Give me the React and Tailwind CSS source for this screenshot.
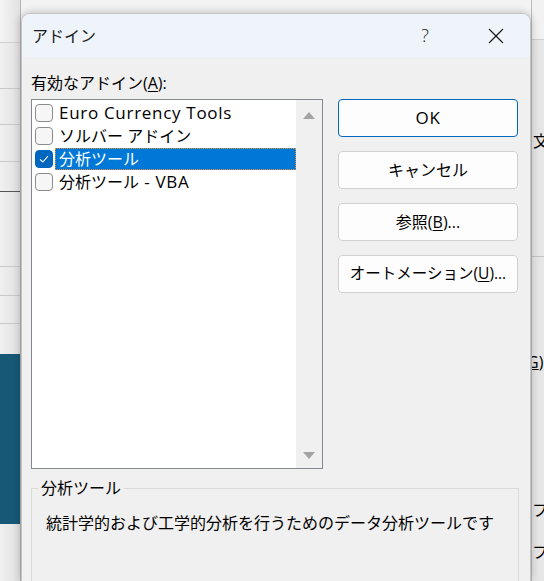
import React from 'react';

const FONT = { fontFamily: '"Open Sans", "Noto Sans CJK JP", sans-serif' };

// Latin runs are drawn a little larger and wider, as Segoe UI is next to Yu Gothic UI
const L = ({ children }) => <span className="text-[17px] tracking-[0.7px]">{children}</span>;

const ADDINS = [
  { id: 'euro', name: <L>Euro Currency Tools</L>, checked: false },
  { id: 'solver', name: 'ソルバー アドイン', checked: false },
  { id: 'atp', name: '分析ツール', checked: true, selected: true },
  {
    id: 'atpvba',
    name: (
      <>
        分析ツール<L>&nbsp;- VBA</L>
      </>
    ),
    checked: false,
  },
];

// background sheet cells on the left, heights match the grid behind the dialog
const LEFT_CELLS = [
  'h-[43px] border-b border-[#cfcfcf] bg-gradient-to-r from-[#f4f4f4] to-[#e2e2e2]',
  'h-[46px] border-b border-[#c9c9c9] bg-gradient-to-r from-[#f0f0f0] to-[#e0e0e0]',
  'h-[36px] border-b border-[#c9c9c9] bg-gradient-to-r from-[#f0f0f0] to-[#e0e0e0]',
  'h-[37px] border-b border-[#c9c9c9] bg-gradient-to-r from-[#f0f0f0] to-[#e0e0e0]',
  'h-[30px] border-b border-[#555555] bg-gradient-to-r from-[#f0f0f0] to-[#e0e0e0]',
  'h-[75px] border-b border-[#c9c9c9] bg-gradient-to-r from-[#f0f0f0] to-[#e0e0e0]',
  'h-[29px] border-b border-[#c9c9c9] bg-gradient-to-r from-[#f0f0f0] to-[#e0e0e0]',
  'h-[28px] border-b border-[#c9c9c9] bg-gradient-to-r from-[#f0f0f0] to-[#e0e0e0]',
  'h-[30px] bg-gradient-to-r from-[#f0f0f0] to-[#e0e0e0]',
  'h-[170px] bg-[#175877]',
  'flex-1 bg-gradient-to-r from-[#f0f0f0] to-[#e0e0e0]',
];

const CheckBox = ({ checked }) => (
  <div
    className={
      'flex h-[18px] w-[18px] shrink-0 items-center justify-center rounded-[4px] border ' +
      (checked ? 'border-[#0067c0] bg-[#0067c0]' : 'border-[#8b8b8b] bg-[#f6f6f6]')
    }
  >
    {checked && (
      <svg width="12" height="12" viewBox="0 0 12 12" fill="none">
        <path d="M2 6.3 L4.8 9 L10 3.2" stroke="white" strokeWidth="1.1" />
      </svg>
    )}
  </div>
);

const AddinRow = ({ item }) => (
  <div className="flex h-[23px] shrink-0 items-center pl-[3px]">
    <CheckBox checked={item.checked} />
    <div
      className={
        'ml-[2px] flex h-[22px] items-center whitespace-nowrap pl-[3px] text-[16px] leading-none ' +
        (item.selected
          ? 'flex-1 border border-dotted border-[#e8913a] bg-[#0078d7] text-white'
          : 'border border-transparent text-black')
      }
    >
      {item.name}
    </div>
  </div>
);

const DialogButton = ({ children, primary }) => (
  <button
    className={
      'flex h-[38px] w-[180px] shrink-0 items-center justify-center rounded-[4px] border bg-[#fdfdfd] text-[16px] text-black ' +
      (primary ? 'border-[#0067c0]' : 'border-[#d0d0d0]')
    }
  >
    {children}
  </button>
);

const App = () => {
  return (
    <div className="flex h-[581px] w-[544px] overflow-hidden bg-[#f3f3f3]" style={FONT}>
      {/* sheet behind, left */}
      <div className="flex w-[21px] shrink-0 flex-col border-r border-[#b4b4b4]">
        {LEFT_CELLS.map((c, i) => (
          <div key={i} className={'shrink-0 ' + c} />
        ))}
      </div>

      {/* dialog */}
      <div className="z-10 mt-[13px] flex w-[510px] shrink-0 flex-col overflow-hidden rounded-t-[9px] border border-b-0 border-[#c4c4c4] bg-[#f0f0f0] shadow-[0_0_8px_rgba(0,0,0,0.25)]">
        <div className="flex h-[43px] shrink-0 items-center bg-[#eef4f9] pl-[10px]">
          <span className="text-[16px] text-[#1b1b1b]">アドイン</span>
          <div className="ml-auto flex items-center pr-[11px]">
            <span className="flex w-[46px] justify-center text-[18px] font-light text-[#1b1b1b]">?</span>
            <span className="ml-[25px] flex w-[46px] justify-center">
              <svg width="16" height="16" viewBox="0 0 16 16">
                <path d="M1 1 L15 15 M15 1 L1 15" stroke="#1b1b1b" strokeWidth="1.2" />
              </svg>
            </span>
          </div>
        </div>

        <div className="flex shrink-0 flex-col px-[9px] pt-[16px]">
          <div className="mb-[6px] h-[20px] shrink-0 text-[16px] leading-[20px] text-black">
            有効なアドイン(<span className="underline underline-offset-2">A</span>):
          </div>

          <div className="flex shrink-0">
            <div className="flex h-[370px] w-[292px] shrink-0 border border-[#828790] bg-white">
              <div className="flex flex-1 flex-col pt-[1px]">
                {ADDINS.map((a) => (
                  <AddinRow key={a.id} item={a} />
                ))}
              </div>
              <div className="flex w-[26px] flex-col items-center justify-between bg-[#f0f0f0] pb-[9px] pt-[12px]">
                <svg width="12" height="7" viewBox="0 0 12 7">
                  <path d="M6 0 L12 7 L0 7 Z" fill="#a3a3a3" />
                </svg>
                <svg width="12" height="7" viewBox="0 0 12 7">
                  <path d="M0 0 L12 0 L6 7 Z" fill="#a3a3a3" />
                </svg>
              </div>
            </div>

            <div className="ml-[15px] flex flex-col gap-[14px]">
              <DialogButton primary>
                <L>OK</L>
              </DialogButton>
              <DialogButton>キャンセル</DialogButton>
              <DialogButton>
                参照(<span className="underline underline-offset-2">B</span>)...
              </DialogButton>
              <DialogButton>
                <span className="text-[15.5px]">
                  オートメーション(<span className="underline underline-offset-2">U</span>)...
                </span>
              </DialogButton>
            </div>
          </div>

          <fieldset className="mt-[9px] h-[140px] w-[488px] shrink-0 border border-[#dadada]">
            <legend className="ml-[6px] px-[3px] text-[16px] leading-[20px] text-black">分析ツール</legend>
            <p className="pl-[14px] pt-[15px] text-[16px] leading-[20px] text-black">
              統計学的および工学的分析を行うためのデータ分析ツールです
            </p>
          </fieldset>
        </div>
      </div>

      {/* sheet behind, right */}
      <div className="flex flex-1 flex-col overflow-hidden border-l border-[#bdbdbd] bg-[#e6e6e6] text-[16px] leading-[20px] text-black">
        <div className="h-[40px] shrink-0 border-b border-[#d0d0d0] bg-[#f2f2f2]" />
        <div className="h-[217px] shrink-0 border-b border-[#c4c4c4] pl-[1px] pt-[91px]">文</div>
        <div className="h-[243px] shrink-0 whitespace-nowrap pt-[95px]">
          <span className="-ml-[5px] underline">G</span>)
        </div>
        <div className="shrink-0 whitespace-nowrap">フロ</div>
        <div className="mt-[22px] shrink-0 whitespace-nowrap">フロ</div>
      </div>
    </div>
  );
};

export default App;
